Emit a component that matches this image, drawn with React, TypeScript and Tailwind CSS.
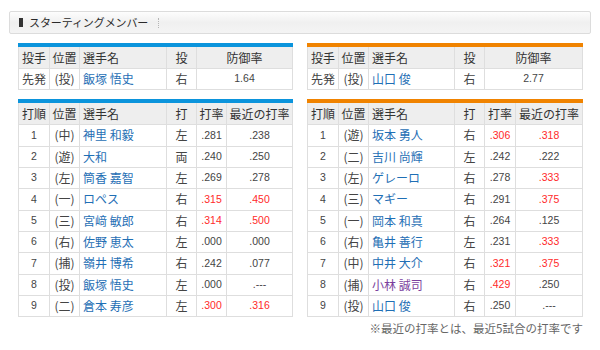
import React from "react";

const JP = { fontFamily: '"Noto Sans CJK JP", "Noto Sans", sans-serif' };
const NUM = { fontFamily: '"Liberation Sans", Arial, sans-serif' };

type Cell = { t: string; kind?: "name" | "num" | "text"; color?: string; align?: "left" | "center" };

const BLUE = "#1f6fb5";
const RED = "#ff2a2a";
const PURPLE = "#7b3f9e";

function Row({ cells, widths, header, h }: { cells: Cell[]; widths: number[]; header?: boolean; h: string }) {
  return (
    <div className={`flex border-b border-[#dedede] ${header ? "bg-[#eeeeee]" : "bg-white"} ${h}`}>
      {cells.map((c, i) => {
        const last = i === cells.length - 1;
        const isNum = c.kind === "num";
        const left = c.align === "left";
        return (
          <div
            key={i}
            className={`flex items-center ${left ? "justify-start pl-[3px]" : "justify-center"} ${last ? "flex-1" : "border-r border-[#dedede] shrink-0"} ${isNum ? "text-[10.5px]" : "text-[12px]"} whitespace-nowrap overflow-hidden`}
            style={{
              ...(isNum ? NUM : JP),
              ...(last ? {} : { width: widths[i] }),
              color: c.color ?? (header ? "#333333" : "#444444"),
            }}
          >
            {c.t}
          </div>
        );
      })}
    </div>
  );
}

function Table({
  bar,
  widths,
  header,
  rows,
  width,
}: {
  bar: string;
  widths: number[];
  header: string[];
  rows: Cell[][];
  width: number;
}) {
  return (
    <div style={{ width }}>
      <div className={`h-[4px] ${bar}`} />
      <div className="border-l border-r border-[#dedede]">
        <Row
          header
          h="h-[22px]"
          widths={widths}
          cells={header.map((t, i) => ({ t, align: i === 2 ? "left" : "center" }))}
        />
        {rows.map((r, i) => (
          <Row key={i} h="h-[21.33px]" widths={widths} cells={r} />
        ))}
      </div>
    </div>
  );
}

type B = [string, string, string, string, string, string, string?, string?];

function batter(b: B): Cell[] {
  const [n, pos, name, hand, avg, rec, avgC, nameC] = b;
  const recRed = rec.startsWith("r");
  const avgRed = avgC === "r" || avg.startsWith("r");
  return [
    { t: n, kind: "num" },
    { t: pos },
    { t: name, align: "left", color: nameC ?? BLUE },
    { t: hand },
    { t: avg.replace(/^r/, ""), kind: "num", color: avgRed ? RED : "#444" },
    { t: rec.replace(/^r/, ""), kind: "num", color: recRed ? RED : "#444" },
  ];
}

const leftBatters: B[] = [
  ["1", "(中)", "神里 和毅", "左", ".281", ".238"],
  ["2", "(遊)", "大和", "両", ".240", ".250"],
  ["3", "(左)", "筒香 嘉智", "左", ".269", ".278"],
  ["4", "(一)", "ロペス", "右", ".315", "r.450", "r"],
  ["5", "(三)", "宮﨑 敏郎", "右", ".314", "r.500", "r"],
  ["6", "(右)", "佐野 恵太", "左", ".000", ".000"],
  ["7", "(捕)", "嶺井 博希", "右", ".242", ".077"],
  ["8", "(投)", "飯塚 悟史", "左", ".000", ".---"],
  ["9", "(二)", "倉本 寿彦", "左", ".300", "r.316", "r"],
];

const rightBatters: B[] = [
  ["1", "(遊)", "坂本 勇人", "右", ".306", "r.318", "r"],
  ["2", "(二)", "吉川 尚輝", "左", ".242", ".222"],
  ["3", "(左)", "ゲレーロ", "右", ".278", "r.333"],
  ["4", "(三)", "マギー", "右", ".291", "r.375"],
  ["5", "(一)", "岡本 和真", "右", ".264", ".125"],
  ["6", "(右)", "亀井 善行", "左", ".231", "r.333"],
  ["7", "(中)", "中井 大介", "右", ".321", "r.375", "r"],
  ["8", "(捕)", "小林 誠司", "右", ".429", ".250", "r", PURPLE],
  ["9", "(投)", "山口 俊", "右", ".250", ".---"],
];

function pitcher(name: string, era: string): Cell[] {
  return [
    { t: "先発" },
    { t: "(投)" },
    { t: name, align: "left", color: BLUE },
    { t: "右" },
    { t: era, kind: "num" },
  ];
}

export default function App() {
  const lw = [31, 30, 87, 30, 30];
  const rw = [31, 30, 86, 30, 31];
  const hdr = ["打順", "位置", "選手名", "打", "打率", "最近の打率"];
  const phdr = ["投手", "位置", "選手名", "投", "防御率"];
  return (
    <div className="w-[600px] h-[350px] bg-white overflow-hidden" style={JP}>
      <div className="pt-[11px] px-[9px]">
        <div className="h-[23px] border border-[#dcdcdc] rounded-[2px] bg-gradient-to-b from-[#fdfdfd] via-[#f0f0f0] to-[#f4f4f4] flex items-center pl-[9px]">
          <div className="w-[4px] h-[9px] bg-[#333333] mr-[6px]" />
          <span className="text-[11px] text-[#2a2a2a] tracking-[-0.1px]" style={JP}>
            スターティングメンバー
          </span>
          <div className="ml-[10px] h-[10px] border-l border-dotted border-[#b5b5b5]" />
        </div>
      </div>
      <div className="flex pl-[18px] gap-[14px] pt-[9px]">
        <div className="flex flex-col gap-[9px]">
          <Table
            bar="bg-[#0b94dc]"
            width={275}
            widths={[31, 30, 87, 30]}
            header={phdr}
            rows={[pitcher("飯塚 悟史", "1.64")]}
          />
          <Table bar="bg-[#0b94dc]" width={275} widths={lw} header={hdr} rows={leftBatters.map(batter)} />
        </div>
        <div className="flex flex-col">
          <Table
            bar="bg-[#f08300]"
            width={276}
            widths={[31, 30, 86, 30]}
            header={phdr}
            rows={[pitcher("山口 俊", "2.77")]}
          />
          <div className="mt-[9px]">
            <Table bar="bg-[#f08300]" width={276} widths={rw} header={hdr} rows={rightBatters.map(batter)} />
          </div>
          <div className="flex justify-end mt-[3px] leading-[16px] text-[11.5px] text-[#666666]" style={JP}>
            ※最近の打率とは、最近5試合の打率です
          </div>
        </div>
      </div>
    </div>
  );
}
